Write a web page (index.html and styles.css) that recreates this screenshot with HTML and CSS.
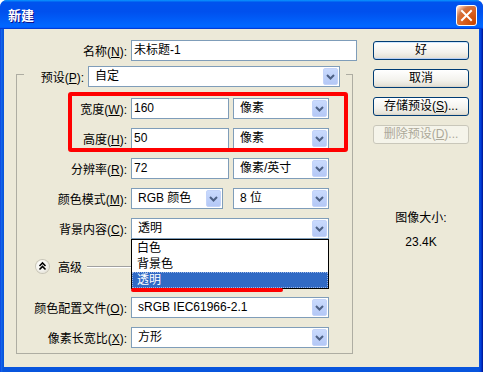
FILE: index.html
```html
<!DOCTYPE html>
<html lang="zh-CN">
<head>
<meta charset="utf-8">
<title>新建</title>
<link rel="stylesheet" href="styles.css">
</head>
<body>
<div class="window">
  <div class="titlebar">
    <span class="title">新建</span>
    <span class="close"><svg width="19" height="19" viewBox="0 0 19 19"><path d="M5 5 L14 14 M14 5 L5 14" stroke="#fff" stroke-width="2" stroke-linecap="square" fill="none"/></svg></span>
  </div>
  <div class="client">
    <div class="main">
      <div class="name-row">
        <span class="lbl-name">名称(<u>N</u>):</span>
        <div class="field w-name">未标题-1</div>
      </div>
      <fieldset class="group">
        <legend class="preset">
          <span class="lbl-preset">预设(<u>P</u>):</span>
          <div class="combo w-preset"><span class="val">自定</span><span class="arrow"><svg width="13" height="15" viewBox="0 0 13 15"><path d="M3 6 L6.5 9.5 L10 6" stroke="#4D6185" stroke-width="2" fill="none"/></svg></span></div>
        </legend>
        <div class="form">
          <div class="row">
            <span class="lbl">宽度(<u>W</u>):</span>
            <div class="field w-num">160</div>
            <div class="combo w-unit"><span class="val">像素</span><span class="arrow"><svg width="13" height="15" viewBox="0 0 13 15"><path d="M3 6 L6.5 9.5 L10 6" stroke="#4D6185" stroke-width="2" fill="none"/></svg></span></div>
          </div>
          <div class="row">
            <span class="lbl">高度(<u>H</u>):</span>
            <div class="field w-num">50</div>
            <div class="combo w-unit"><span class="val">像素</span><span class="arrow"><svg width="13" height="15" viewBox="0 0 13 15"><path d="M3 6 L6.5 9.5 L10 6" stroke="#4D6185" stroke-width="2" fill="none"/></svg></span></div>
          </div>
          <div class="row">
            <span class="lbl">分辨率(<u>R</u>):</span>
            <div class="field w-num">72</div>
            <div class="combo w-unit"><span class="val">像素/英寸</span><span class="arrow"><svg width="13" height="15" viewBox="0 0 13 15"><path d="M3 6 L6.5 9.5 L10 6" stroke="#4D6185" stroke-width="2" fill="none"/></svg></span></div>
          </div>
          <div class="row">
            <span class="lbl">颜色模式(<u>M</u>):</span>
            <div class="combo w-mode"><span class="val">RGB 颜色</span><span class="arrow"><svg width="13" height="15" viewBox="0 0 13 15"><path d="M3 6 L6.5 9.5 L10 6" stroke="#4D6185" stroke-width="2" fill="none"/></svg></span></div>
            <div class="combo w-unit"><span class="val">8 位</span><span class="arrow"><svg width="13" height="15" viewBox="0 0 13 15"><path d="M3 6 L6.5 9.5 L10 6" stroke="#4D6185" stroke-width="2" fill="none"/></svg></span></div>
          </div>
          <div class="row">
            <span class="lbl">背景内容(<u>C</u>):</span>
            <div class="combo-wrap">
              <div class="combo w-full"><span class="val">透明</span><span class="arrow"><svg width="13" height="15" viewBox="0 0 13 15"><path d="M3 6 L6.5 9.5 L10 6" stroke="#4D6185" stroke-width="2" fill="none"/></svg></span></div>
              <ul class="dropdown">
                <li>白色</li>
                <li>背景色</li>
                <li class="sel">透明</li>
              </ul>
            </div>
          </div>
          <div class="adv-row">
            <span class="adv-btn"><svg width="11" height="11" viewBox="0 0 11 11"><path d="M2.5 5 L5.5 2 L8.5 5 M2.5 8.5 L5.5 5.5 L8.5 8.5" stroke="#000" stroke-width="1.6" fill="none"/></svg></span>
            <span class="adv-text">高级</span>
            <span class="adv-line"></span>
          </div>
          <div class="row">
            <span class="lbl">颜色配置文件(<u>O</u>):</span>
            <div class="combo w-full"><span class="val">sRGB IEC61966-2.1</span><span class="arrow"><svg width="13" height="15" viewBox="0 0 13 15"><path d="M3 6 L6.5 9.5 L10 6" stroke="#4D6185" stroke-width="2" fill="none"/></svg></span></div>
          </div>
          <div class="row">
            <span class="lbl">像素长宽比(<u>X</u>):</span>
            <div class="combo w-full"><span class="val">方形</span><span class="arrow"><svg width="13" height="15" viewBox="0 0 13 15"><path d="M3 6 L6.5 9.5 L10 6" stroke="#4D6185" stroke-width="2" fill="none"/></svg></span></div>
          </div>
        </div>
      </fieldset>
    </div>
    <div class="side">
      <div class="btn default">好</div>
      <div class="btn">取消</div>
      <div class="btn">存储预设(<u>S</u>)...</div>
      <div class="btn disabled">删除预设(<u>D</u>)...</div>
      <div class="info">
        <div>图像大小:</div>
        <div>23.4K</div>
      </div>
    </div>
  </div>
  <div class="mark-rect"></div>
  <div class="mark-line"></div>
</div>
</body>
</html>
```
FILE: styles.css
```css
* { box-sizing: border-box; }

body {
  margin: 0;
  background: #ffffff;
  font-family: "Liberation Sans", "Noto Sans CJK SC", sans-serif;
  font-size: 12px;
  color: #000;
}

.window {
  width: 483px;
  height: 372px;
  position: relative;
  display: flex;
  flex-direction: column;
  background: linear-gradient(to right, #0831d9 0, #166aee 1px, #0855dd 3px, #0855dd 479px, #003bda 481px, #00138c 483px);
  border-radius: 7px 7px 0 0;
  overflow: hidden;
}

.titlebar {
  height: 29px;
  flex: none;
  display: flex;
  align-items: center;
  justify-content: space-between;
  padding: 2px 6px 0 8px;
  background: linear-gradient(to bottom, #0997ff 0%, #0053ee 8%, #0050ee 40%, #0066ff 88%, #0066ff 93%, #005bff 95%, #003dd7 96%, #003dd7 100%);
}

.title {
  color: #fff;
  font-weight: 700;
  font-size: 13px;
  line-height: 16px;
  text-shadow: 1px 1px #0f1089;
}

.close {
  width: 21px;
  height: 21px;
  display: flex;
  align-items: center;
  justify-content: center;
  border: 1px solid #fff;
  border-radius: 3px;
  background: radial-gradient(circle at 90% 90%, #cc4600 0%, #dc6527 55%, #cd7546 70%, #ffccb2 90%, #fff 100%);
}

.client {
  flex: 1;
  margin: 0 4px 5px;
  background: #ece9d8;
  display: flex;
}

.main {
  width: 353px;
  flex: none;
  padding-top: 11px;
}

.name-row {
  display: flex;
  align-items: center;
  height: 21px;
}

.lbl-name {
  width: 123px;
  margin-right: 4px;
  text-align: right;
  white-space: nowrap;
}

.field,
.combo {
  height: 21px;
  background: #fff;
  border: 1px solid #7f9db9;
  flex: none;
}

.field {
  padding-left: 2px;
  line-height: 19px;
  white-space: nowrap;
}

.combo {
  display: flex;
  align-items: center;
  padding: 1px 1px 1px 6px;
}

.combo .val {
  flex: 1;
  line-height: 17px;
  white-space: nowrap;
  overflow: hidden;
}

.arrow {
  width: 15px;
  height: 17px;
  flex: none;
  display: flex;
  align-items: center;
  justify-content: center;
  border: 1px solid #c3d3f9;
  border-radius: 2px;
  background: linear-gradient(to bottom, #c9dafd, #b4c8f6);
}

.w-name { width: 226px; }
.w-num { width: 98px; }
.w-unit { width: 96px; margin-left: 4px; }
.w-mode { width: 92px; }
.w-mode + .w-unit { margin-left: 10px; }
.w-full { width: 198px; }
.w-preset { width: 252px; }

.group {
  margin: 0 0 0 12px;
  padding: 11px 0 5px 0;
  width: 337px;
  min-width: 0;
  border: 1px solid #aeada2;
}

.preset {
  margin-left: 7px;
  padding: 5px 6px 0 13px;
  display: flex;
  align-items: center;
}

.lbl-preset {
  width: 47px;
  margin-right: 4px;
  text-align: right;
  white-space: nowrap;
}

.form {
  display: flex;
  flex-direction: column;
  gap: 9px;
}

.row {
  display: flex;
  align-items: center;
  height: 21px;
}

.row .lbl {
  width: 110px;
  margin-right: 4px;
  text-align: right;
  white-space: nowrap;
}

.combo-wrap {
  position: relative;
}

.dropdown {
  position: absolute;
  left: 0;
  top: 21px;
  width: 198px;
  margin: 0;
  padding: 0;
  list-style: none;
  background: #fff;
  border: 1px solid #000;
  z-index: 2;
}

.dropdown li {
  height: 16px;
  line-height: 16px;
  padding-left: 5px;
}

.dropdown li.sel {
  background: #316ac5;
  color: #fff;
  outline: 1px dotted #9fb9e6;
  outline-offset: -1px;
}

.adv-row {
  display: flex;
  align-items: center;
  height: 21px;
  margin: 8px 24px 11px 19px;
}

.adv-btn {
  width: 13px;
  height: 13px;
  border-radius: 50%;
  display: flex;
  align-items: center;
  justify-content: center;
  background: radial-gradient(circle at 40% 35%, #ffffff 0%, #f4f3ee 50%, #d6d3c6 100%);
  box-shadow: 0 0 0 1px #c8c5b8;
}

.adv-text {
  margin-left: 9px;
  white-space: nowrap;
}

.adv-line {
  flex: 1;
  height: 2px;
  margin-left: 5px;
  border-top: 1px solid #a0a0a0;
  border-bottom: 1px solid #ffffff;
}

.side {
  width: 96px;
  margin-left: 16px;
  padding-top: 12px;
  display: flex;
  flex-direction: column;
}

.btn {
  width: 96px;
  height: 19px;
  margin-bottom: 9px;
  border: 1px solid #003c74;
  border-radius: 3px;
  background: linear-gradient(to bottom, #ffffff 0%, #f3f2ed 60%, #e6e3d8 90%, #d6d0c5 100%);
  text-align: center;
  line-height: 17px;
  white-space: nowrap;
}

.btn.default {
  box-shadow: inset 0 -1px 0 #b8cff5, inset 0 1px 0 #cee7ff;
}

.btn.disabled {
  border-color: #c9c7ba;
  background: #f5f4ea;
  color: #aca899;
}

.info {
  margin-top: 53px;
  text-align: center;
  line-height: 24px;
}

.mark-rect {
  position: absolute;
  left: 68px;
  top: 92px;
  width: 280px;
  height: 60px;
  border: 4px solid #ff0000;
  border-radius: 3px;
  z-index: 3;
}

.mark-line {
  position: absolute;
  left: 131px;
  top: 288px;
  width: 152px;
  height: 4px;
  background: #ff0000;
  border-radius: 2px;
  z-index: 3;
}
```
